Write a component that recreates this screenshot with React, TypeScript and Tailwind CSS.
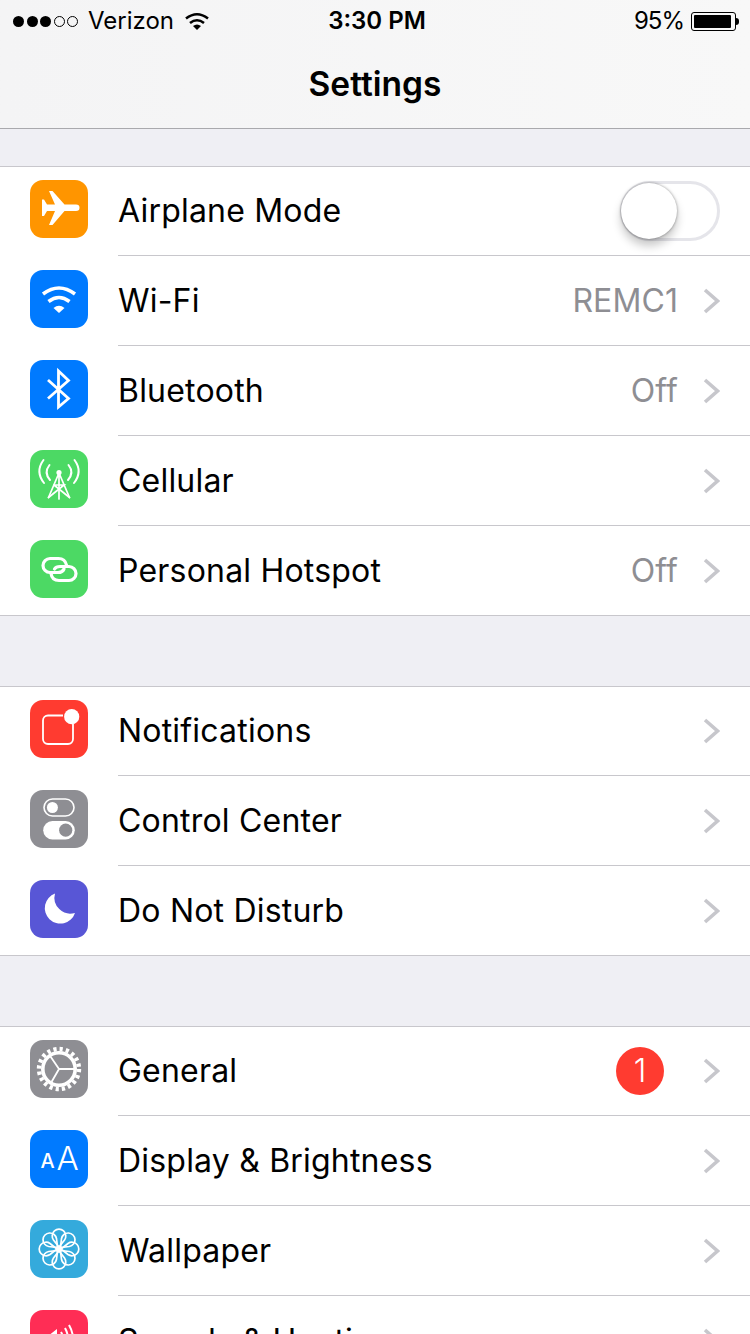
import type { ReactNode } from "react"

const sans = "font-['Inter',sans-serif]"

function Tile({ color, children }: { color: string; children: ReactNode }) {
  return (
    <svg viewBox="0 0 58 58" className="h-[58px] w-[58px] shrink-0">
      <rect width="58" height="58" rx="13" fill={color} />
      {children}
    </svg>
  )
}

const AirplaneIcon = () => (
  <Tile color="#ff9500">
    <path d="M12 19.5H14L17 24.5H25L19 11H22.5L34.5 24.5H46Q49.5 24.5 49.5 27.7Q49.5 31 46 31H34.5L22.5 45H19L25 31H17L14 36H12Z" fill="#fff" />
  </Tile>
)

const WifiIcon = () => (
  <Tile color="#007aff">
    <g fill="none" stroke="#fff" strokeWidth="3.6">
      <path d="M13 24Q29 12 45 24" />
      <path d="M18.5 31.5Q29 23.5 39.5 31.5" />
    </g>
    <path d="M23.5 38Q29 33.5 34.5 38L29 43Z" fill="#fff" />
  </Tile>
)

const BluetoothIcon = () => (
  <Tile color="#007aff">
    <path d="M18 20L38.5 38.5L28.5 47V11L38.5 20.5L18 38.5" fill="none" stroke="#fff" strokeWidth="2.8" />
  </Tile>
)

const CellularIcon = () => (
  <Tile color="#4cd964">
    <g fill="none" stroke="#fff" strokeWidth="2" strokeLinecap="round">
      <path d="M13.5 10Q5 21.5 14 33" />
      <path d="M19.5 15Q13.5 22.5 20 30" />
      <path d="M44.5 10Q53 21.5 44 33" />
      <path d="M38.5 15Q44.5 22.5 38 30" />
    </g>
    <g fill="none" stroke="#fff" strokeWidth="1.7" strokeLinecap="round">
      <path d="M29 23V49M29 23L18.5 47.5M29 23L39.5 47.5" />
      <path d="M24 35H34L18.5 47.5M24 35L39.5 47.5" />
    </g>
    <circle cx="29" cy="22.5" r="2.6" fill="#fff" />
  </Tile>
)

const HotspotIcon = () => (
  <Tile color="#4cd964">
    <g fill="none" stroke="#fff" strokeWidth="3.2" strokeLinecap="round">
      <path d="M36.5 25Q35 18.5 28.5 18.5H20A7 7 0 0 0 20 32.5H28Q32.5 32.5 34 29" />
      <path d="M21 33.5Q22 40.5 29 40.5H39A7 7 0 0 0 39 26.5H30Q26 26.5 24.5 29" />
    </g>
  </Tile>
)

const NotificationsIcon = () => (
  <Tile color="#ff3b30">
    <path d="M33 15.5H18A5 5 0 0 0 13 20.5V39A5 5 0 0 0 18 44H38A5 5 0 0 0 43 39V24" fill="none" stroke="#fff" strokeWidth="1.8" />
    <circle cx="41.7" cy="16.7" r="7.6" fill="#fff" />
  </Tile>
)

const ControlCenterIcon = () => (
  <Tile color="#8e8e93">
    <rect x="14" y="9" width="30" height="17" rx="8.5" fill="none" stroke="#fff" strokeWidth="1.6" />
    <circle cx="22.4" cy="17.5" r="5.5" fill="#fff" />
    <rect x="13.2" y="31" width="31.6" height="18.4" rx="9.2" fill="#fff" />
    <circle cx="35.7" cy="40.2" r="6.6" fill="#8e8e93" />
  </Tile>
)

const MoonIcon = () => (
  <Tile color="#5856d6">
    <path d="M25 13.5A15.5 15.5 0 1 0 45 33A16 16 0 0 1 25 13.5Z" fill="#fff" />
  </Tile>
)

const GearIcon = () => (
  <Tile color="#8e8e93">
    <g fill="none" stroke="#fff">
      <circle cx="29" cy="29" r="20" strokeWidth="4.4" strokeDasharray="3.2 3.083" />
      <circle cx="29" cy="29" r="16.2" strokeWidth="3.6" />
      <path d="M29 29L20.5 16.5M29 29H44M29 29L21.5 42" strokeWidth="1.8" />
    </g>
  </Tile>
)

const DisplayIcon = () => (
  <Tile color="#007aff">
    <g fill="#fff" fontFamily="Inter, sans-serif" textAnchor="middle">
      <text x="17.5" y="37.5" fontSize="20" fontWeight="500">A</text>
      <text x="37.5" y="40" fontSize="33" fontWeight="300">A</text>
    </g>
  </Tile>
)

const WallpaperIcon = () => (
  <Tile color="#34aadc">
    <g fill="none" stroke="#fff" strokeWidth="1.7">
      {[0, 45, 90, 135, 180, 225, 270, 315].map((angle) => (
        <g key={angle} transform={`rotate(${angle} 29 29)`}>
          <path d="M23.5 20A6.8 6.8 0 1 1 34.5 20L29 27Z" />
        </g>
      ))}
    </g>
    <circle cx="29" cy="29" r="3.2" fill="#fff" />
  </Tile>
)

const SoundsIcon = () => (
  <Tile color="#ff2d55">
    <path d="M12 26H18L27 19V40L18 33H12Z" fill="#fff" />
    <g fill="none" stroke="#fff" strokeWidth="2">
      <path d="M31 22Q35 29 31 36" />
      <path d="M35 18Q41 29 35 40" />
      <path d="M39 15Q47 29 39 43" />
    </g>
  </Tile>
)

const Chevron = () => (
  <svg viewBox="0 0 18 26" className="h-[26px] w-[18px] shrink-0">
    <path d="M3 2L15.5 13L3 24" fill="none" stroke="#c7c7cc" strokeWidth="3.6" />
  </svg>
)

function Switch() {
  return (
    <div className="relative h-[60px] w-[100px] rounded-full border-[3px] border-[#e5e5ea] bg-white">
      <div className="absolute left-[-2px] top-[-1px] h-[56px] w-[56px] rounded-full bg-white shadow-[0_7px_10px_rgba(0,0,0,0.22),0_0_3px_rgba(0,0,0,0.4)]" />
    </div>
  )
}

type Row = {
  label: string
  icon: ReactNode
  value?: string
  badge?: string
  toggle?: boolean
}

const groups: Row[][] = [
  [
    { label: "Airplane Mode", icon: <AirplaneIcon />, toggle: true },
    { label: "Wi-Fi", icon: <WifiIcon />, value: "REMC1" },
    { label: "Bluetooth", icon: <BluetoothIcon />, value: "Off" },
    { label: "Cellular", icon: <CellularIcon /> },
    { label: "Personal Hotspot", icon: <HotspotIcon />, value: "Off" },
  ],
  [
    { label: "Notifications", icon: <NotificationsIcon /> },
    { label: "Control Center", icon: <ControlCenterIcon /> },
    { label: "Do Not Disturb", icon: <MoonIcon /> },
  ],
  [
    { label: "General", icon: <GearIcon />, badge: "1" },
    { label: "Display & Brightness", icon: <DisplayIcon /> },
    { label: "Wallpaper", icon: <WallpaperIcon /> },
    { label: "Sounds & Haptics", icon: <SoundsIcon /> },
  ],
]

function SettingsRow({ row, last }: { row: Row; last: boolean }) {
  return (
    <div className={`flex h-[90px] bg-white pl-[30px] ${last ? "border-b border-[#c8c7cc]" : ""}`}>
      <div className="pt-[14px]">{row.icon}</div>
      <div className={`ml-[30px] flex flex-1 items-center pr-[30px] ${last ? "" : "border-b border-[#c8c7cc]"}`}>
        <span className="flex-1 text-[32px] tracking-[0.2px] text-black">{row.label}</span>
        {row.value && <span className="mr-[24px] text-[32px] tracking-[0.1px] text-[#8e8e93]">{row.value}</span>}
        {row.badge && (
          <span className="mr-[38px] flex h-[48px] w-[48px] items-center justify-center rounded-full bg-[#ff3b30] text-[32px] font-light text-white">
            {row.badge}
          </span>
        )}
        {row.toggle ? <Switch /> : <Chevron />}
      </div>
    </div>
  )
}

function StatusBar() {
  return (
    <div className="grid h-[42px] grid-cols-3 items-center text-[24px] text-black">
      <div className="flex items-center pl-[13px]">
        <div className="flex gap-[2.5px]">
          {[0, 1, 2].map((i) => (
            <span key={i} className="h-[11px] w-[11px] rounded-full bg-black" />
          ))}
          {[3, 4].map((i) => (
            <span key={i} className="h-[11px] w-[11px] rounded-full border border-black" />
          ))}
        </div>
        <span className="ml-[10px]">Verizon</span>
        <svg viewBox="0 0 24 18" className="ml-[11px] h-[18px] w-[24px]">
          <g fill="none" stroke="#000" strokeWidth="2.6">
            <path d="M1 6.5Q12 -2 23 6.5" />
            <path d="M5 11Q12 5.5 19 11" />
          </g>
          <path d="M8 14Q12 11 16 14L12 18Z" />
        </svg>
      </div>
      <div className="pl-[4px] text-center font-semibold">3:30 PM</div>
      <div className="flex items-center justify-end pr-[11px]">
        <span className="tracking-[-1px]">95%</span>
        <div className="ml-[7px] h-[19px] w-[45px] rounded-[3px] border border-black p-[2px]">
          <div className="h-full w-[95%] rounded-[1px] bg-black" />
        </div>
        <div className="h-[7px] w-[3px] rounded-r-full bg-black" />
      </div>
    </div>
  )
}

export default function App() {
  return (
    <div className={`h-[1334px] w-[750px] overflow-hidden bg-[#efeff4] ${sans}`}>
      <div className="h-[129px] border-b border-[#a9a9ad] bg-gradient-to-r from-[#f4f4f5] to-[#f8f8f8]">
        <StatusBar />
        <div className="flex h-[84px] items-center justify-center text-[33.5px] font-semibold text-black">Settings</div>
      </div>
      <div className="flex flex-col gap-[70px] pt-[37px]">
        {groups.map((group) => (
          <div key={group[0].label}>
            <div className="relative z-10 -mb-px h-px bg-[#c8c7cc]" />
            {group.map((row, index) => (
              <SettingsRow key={row.label} row={row} last={index === group.length - 1} />
            ))}
          </div>
        ))}
      </div>
    </div>
  )
}
